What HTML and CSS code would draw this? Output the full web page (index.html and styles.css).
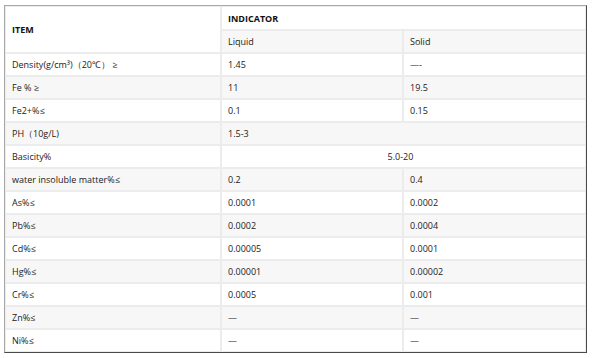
FILE: index.html
```html
<!DOCTYPE html>
<html lang="en">
<head>
  <meta charset="UTF-8">
  <meta name="viewport" content="width=device-width, initial-scale=1.0">
  <title>Polyferric Sulfate Specification</title>
  <link rel="stylesheet" href="styles.css">
</head>
<body>
  <table class="spec">
    <colgroup>
      <col class="col-item">
      <col class="col-liquid">
      <col class="col-solid">
    </colgroup>
    <thead>
      <tr class="head-top">
        <th rowspan="2" class="item-head">ITEM</th>
        <th colspan="2">INDICATOR</th>
      </tr>
      <tr class="shade">
        <td>Liquid</td>
        <td>Solid</td>
      </tr>
    </thead>
    <tbody>
      <tr><td>Density(g/cm³)（20℃） ≥</td><td>1.45</td><td>—-</td></tr>
      <tr class="shade"><td>Fe % ≥</td><td>11</td><td>19.5</td></tr>
      <tr><td>Fe2+%≤</td><td>0.1</td><td>0.15</td></tr>
      <tr class="shade"><td>PH（10g/L)</td><td colspan="2">1.5-3</td></tr>
      <tr><td>Basicity%</td><td colspan="2" class="center">5.0-20</td></tr>
      <tr class="shade"><td>water insoluble matter%≤</td><td>0.2</td><td>0.4</td></tr>
      <tr><td>As%≤</td><td>0.0001</td><td>0.0002</td></tr>
      <tr class="shade"><td>Pb%≤</td><td>0.0002</td><td>0.0004</td></tr>
      <tr><td>Cd%≤</td><td>0.00005</td><td>0.0001</td></tr>
      <tr class="shade"><td>Hg%≤</td><td>0.00001</td><td>0.00002</td></tr>
      <tr><td>Cr%≤</td><td>0.0005</td><td>0.001</td></tr>
      <tr class="shade"><td>Zn%≤</td><td>—</td><td>—</td></tr>
      <tr><td>Ni%≤</td><td>—</td><td>—</td></tr>
    </tbody>
  </table>
</body>
</html>
```

FILE: styles.css
```css
body {
  margin: 0;
  padding: 5px 4px;
  background: #fff;
  font-family: 'Open Sans', 'Noto Sans', Arial, sans-serif;
  font-size: 9px;
  color: #222;
}
.spec {
  width: 583px;
  border-collapse: separate;
  border-spacing: 0;
  table-layout: fixed;
  border: 1px solid;
  border-color: #a8a8a8 #4a4a4a #4a4a4a #a8a8a8;
}
.col-item {
  width: 216px;
}
.col-liquid {
  width: 182px;
}
.spec th,
.spec td {
  height: 21px;
  padding: 0 0 0 6px;
  border: 1px solid #ececec;
  text-align: left;
  vertical-align: middle;
  background: #fff;
  white-space: nowrap;
}
.spec th {
  font-weight: bold;
  color: #111;
}
.head-top th {
  height: 22px;
}
.spec tr.shade td {
  background: #f7f7f7;
}
.spec td.center {
  padding: 0 6px 0 0;
  text-align: center;
}
```
